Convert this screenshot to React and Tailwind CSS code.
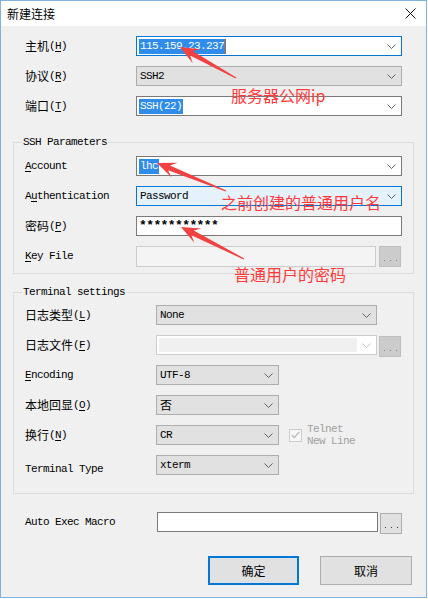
import React from 'react';

const mono = "font-['Liberation_Mono','Noto_Sans_CJK_SC',monospace] text-[11px] tracking-[-0.6px]";
const cjk = "font-['Noto_Sans_CJK_SC',sans-serif] text-[12px] tracking-normal";

// label like 主机(H) or Account with one underlined letter
const Label = ({ cn, en, k, u = 0, className = '' }) => (
  <div className={`flex items-center shrink-0 text-black ${mono} ${className}`}>
    {cn ? (
      <>
        <span className={cjk}>{cn}</span>
        <span>
          (<span className="underline underline-offset-2">{k}</span>)
        </span>
      </>
    ) : (
      <span>
        {en.slice(0, u)}
        {k !== undefined && <span className="underline underline-offset-2">{en[u]}</span>}
        {k !== undefined ? en.slice(u + 1) : en.slice(u)}
      </span>
    )}
  </div>
);

const Chevron = ({ color = '#606060' }) => (
  <svg width="9" height="5" viewBox="0 0 9 5" className="shrink-0">
    <polyline points="0.5,0.5 4.5,4.5 8.5,0.5" fill="none" stroke={color} strokeWidth="1" />
  </svg>
);

const Combo = ({ children, variant = 'input', w = 'w-full' }) => {
  const styles = {
    input: 'bg-white border-[#7a7a7a]',
    focus: 'bg-white border-[#0078d7]',
    select: 'bg-[#e1e1e1] border-[#adadad]',
    active: 'bg-[#e5f1fb] border-[#0078d7]',
  };
  return (
    <div className={`${w} shrink-0 h-[20px] border flex items-center pl-[2px] pr-[5px] ${styles[variant]} ${mono}`}>
      <div className="flex-1 flex items-center h-full">{children}</div>
      <Chevron />
    </div>
  );
};

const Dots = ({ disabled }) => (
  <div
    className={`w-[22px] h-[21px] border flex items-end justify-center pb-[5px] gap-[5px] ${
      disabled ? 'bg-[#cccccc] border-[#bfbfbf]' : 'bg-[#e1e1e1] border-[#adadad]'
    }`}
  >
    <span className={`w-[1px] h-[1px] ${disabled ? 'bg-[#838383]' : 'bg-[#333]'}`} />
    <span className={`w-[1px] h-[1px] ${disabled ? 'bg-[#838383]' : 'bg-[#333]'}`} />
    <span className={`w-[1px] h-[1px] ${disabled ? 'bg-[#838383]' : 'bg-[#333]'}`} />
  </div>
);

const Selected = ({ children }) => (
  <span className="bg-[#2f8ceb] text-white leading-[15px] px-[1px] whitespace-nowrap">{children}</span>
);

function arrowPoints(tx, ty, ex, ey) {
  const dx = tx - ex;
  const dy = ty - ey;
  const len = Math.hypot(dx, dy);
  const ux = dx / len;
  const uy = dy / len;
  const nx = -uy;
  const ny = ux;
  const L = 19, W = 8, notch = 6, w1 = 2.6, w0 = 0.6;
  const bx = tx - ux * L, by = ty - uy * L;
  const kx = tx - ux * (L - notch), ky = ty - uy * (L - notch);
  const pts = [
    [tx, ty],
    [bx + nx * W, by + ny * W],
    [kx + nx * w1, ky + ny * w1],
    [ex + nx * w0, ey + ny * w0],
    [ex - nx * w0, ey - ny * w0],
    [kx - nx * w1, ky - ny * w1],
    [bx - nx * W, by - ny * W],
  ];
  return pts.map((p) => p.map((v) => v.toFixed(1)).join(',')).join(' ');
}

const Arrows = () => (
  <svg className="absolute inset-0 pointer-events-none" width="428" height="599">
    <polygon points={arrowPoints(180, 47, 236, 78)} fill="#f24141" />
    <polygon points={arrowPoints(157, 163, 226, 191)} fill="#f24141" />
    <polygon points={arrowPoints(181, 227, 244, 259)} fill="#f24141" />
  </svg>
);

const Note = ({ children, className }) => (
  <div
    className={`absolute font-['Noto_Sans_CJK_SC',sans-serif] text-[16px] leading-[16px] text-[#ff3a3a] whitespace-nowrap ${className}`}
  >
    {children}
  </div>
);

export default function App() {
  return (
    <div className="relative w-[428px] h-[599px] bg-white">
      <div className="w-[427px] h-[598px] border border-[#7fb2dd] flex flex-col">
        {/* title bar */}
        <div className="h-[25px] bg-white flex items-center justify-between pl-[6px] pr-[10px]">
          <span className="font-['Noto_Sans_CJK_SC',sans-serif] text-[12px] text-black">新建连接</span>
          <svg width="11" height="11" viewBox="0 0 11 11">
            <path d="M0.5 0.5 L10.5 10.5 M10.5 0.5 L0.5 10.5" stroke="#111" strokeWidth="1" />
          </svg>
        </div>

        <div className="flex-1 bg-[#f0f0f0] px-[12px] pt-[10px] flex flex-col">
          {/* host / protocol / port */}
          <div className="flex flex-col gap-[10px]">
            <div className="flex items-center h-[20px]">
              <Label cn="主机" k="H" className="w-[123px] pl-[12px]" />
              <Combo variant="focus" w="w-[266px]">
                <Selected>115.159.23.237</Selected>
                <span className="w-[1px] h-[15px] bg-[#b8651f]" />
              </Combo>
            </div>
            <div className="flex items-center h-[20px]">
              <Label cn="协议" k="R" className="w-[123px] pl-[12px]" />
              <Combo variant="select" w="w-[266px]">
                <span className="pl-[1px]">SSH2</span>
              </Combo>
            </div>
            <div className="flex items-center h-[20px]">
              <Label cn="端口" k="T" className="w-[123px] pl-[12px]" />
              <Combo w="w-[266px]">
                <Selected>SSH(22)</Selected>
              </Combo>
            </div>
          </div>

          {/* SSH parameters */}
          <fieldset className="mt-[20px] border border-[#dcdcdc] pt-[8px] pb-[6px]">
            <legend className={`ml-[8px] px-[1px] leading-[12px] text-black ${mono}`}>SSH Parameters</legend>
            <div className="flex flex-col gap-[10px] pl-[11px]">
              <div className="flex items-center h-[20px]">
                <Label en="Account" k u={0} className="w-[111px]" />
                <Combo w="w-[266px]">
                  <Selected>lhc</Selected>
                </Combo>
              </div>
              <div className="flex items-center h-[20px]">
                <Label en="Authentication" k u={1} className="w-[111px]" />
                <Combo variant="active" w="w-[266px]">
                  <span className="pl-[1px]">Password</span>
                </Combo>
              </div>
              <div className="flex items-center h-[20px]">
                <Label cn="密码" k="P" className="w-[111px]" />
                <div className={`w-[266px] shrink-0 h-[20px] bg-white border border-[#7a7a7a] flex items-center pl-[2px] text-[13px] font-bold ${mono}`}>
                  ***********
                </div>
              </div>
              <div className="flex items-center h-[21px]">
                <Label en="Key File" k u={0} className="w-[111px]" />
                <div className="w-[240px] shrink-0 h-[21px] bg-[#f4f4f4] border border-[#cccccc]" />
                <div className="ml-[3px]">
                  <Dots disabled />
                </div>
              </div>
            </div>
          </fieldset>

          {/* terminal settings */}
          <fieldset className="mt-[12px] border border-[#dcdcdc] pt-[7px] pb-[18px]">
            <legend className={`ml-[8px] px-[1px] leading-[12px] text-black ${mono}`}>Terminal settings</legend>
            <div className="flex flex-col gap-[10px] pl-[11px]">
              <div className="flex items-center h-[20px]">
                <Label cn="日志类型" k="L" className="w-[131px]" />
                <Combo variant="select" w="w-[221px]">
                  <span className="pl-[1px]">None</span>
                </Combo>
              </div>
              <div className="flex items-center h-[20px]">
                <Label cn="日志文件" k="F" className="w-[131px]" />
                <div className="w-[221px] shrink-0 h-[20px] bg-white border border-[#cccccc] flex items-center pl-[2px] pr-[5px]">
                  <div className="w-[198px] h-[14px] bg-[#f0f0f0]" />
                  <div className="flex-1" />
                  <Chevron color="#c4c4c4" />
                </div>
                <div className="ml-[2px] mt-[3px]">
                  <Dots disabled />
                </div>
              </div>
              <div className="flex items-center h-[20px]">
                <Label en="Encoding" k u={0} className="w-[131px]" />
                <Combo variant="select" w="w-[123px]">
                  <span className="pl-[1px]">UTF-8</span>
                </Combo>
              </div>
              <div className="flex items-center h-[20px]">
                <Label cn="本地回显" k="O" className="w-[131px]" />
                <Combo variant="select" w="w-[123px]">
                  <span className={`pl-[1px] ${cjk}`}>否</span>
                </Combo>
              </div>
              <div className="flex items-center h-[20px]">
                <Label cn="换行" k="N" className="w-[131px]" />
                <Combo variant="select" w="w-[123px]">
                  <span className="pl-[1px]">CR</span>
                </Combo>
                <div className="ml-[10px] w-[13px] h-[13px] border border-[#cccccc] bg-[#f7f7f7] flex items-center justify-center">
                  <svg width="9" height="8" viewBox="0 0 9 8">
                    <polyline points="0.8,4 3.3,6.6 8.3,0.8" fill="none" stroke="#b5b5b5" strokeWidth="1.2" />
                  </svg>
                </div>
                <div className={`ml-[5px] leading-[12px] text-[#a0a0a0] ${mono}`}>
                  Telnet
                  <br />
                  New Line
                </div>
              </div>
              <div className="flex items-center h-[20px]">
                <Label en="Terminal Type" className="w-[131px] pt-[8px]" />
                <Combo variant="select" w="w-[123px]">
                  <span className="pl-[1px]">xterm</span>
                </Combo>
              </div>
            </div>
          </fieldset>

          {/* auto exec macro */}
          <div className="mt-[18px] flex items-start h-[22px]">
            <Label en="Auto Exec Macro" className="w-[144px] pl-[12px] h-[20px]" />
            <div className="w-[221px] shrink-0 h-[20px] bg-white border border-[#7a7a7a]" />
            <div className="ml-[2px] mt-[1px]">
              <Dots />
            </div>
          </div>

          {/* buttons */}
          <div className="mt-[22px] flex justify-end gap-[21px] pr-[2px]">
            <button className="w-[91px] h-[29px] bg-[#e1e1e1] border-2 border-[#0078d7] font-['Noto_Sans_CJK_SC',sans-serif] text-[12px] text-black">
              确定
            </button>
            <button className="w-[92px] h-[29px] bg-[#e1e1e1] border border-[#adadad] font-['Noto_Sans_CJK_SC',sans-serif] text-[12px] text-black">
              取消
            </button>
          </div>
        </div>
      </div>

      <Arrows />
      <Note className="left-[231px] top-[87px]">服务器公网ip</Note>
      <Note className="left-[221px] top-[194px]">之前创建的普通用户名</Note>
      <Note className="left-[234px] top-[266px]">普通用户的密码</Note>
    </div>
  );
}
